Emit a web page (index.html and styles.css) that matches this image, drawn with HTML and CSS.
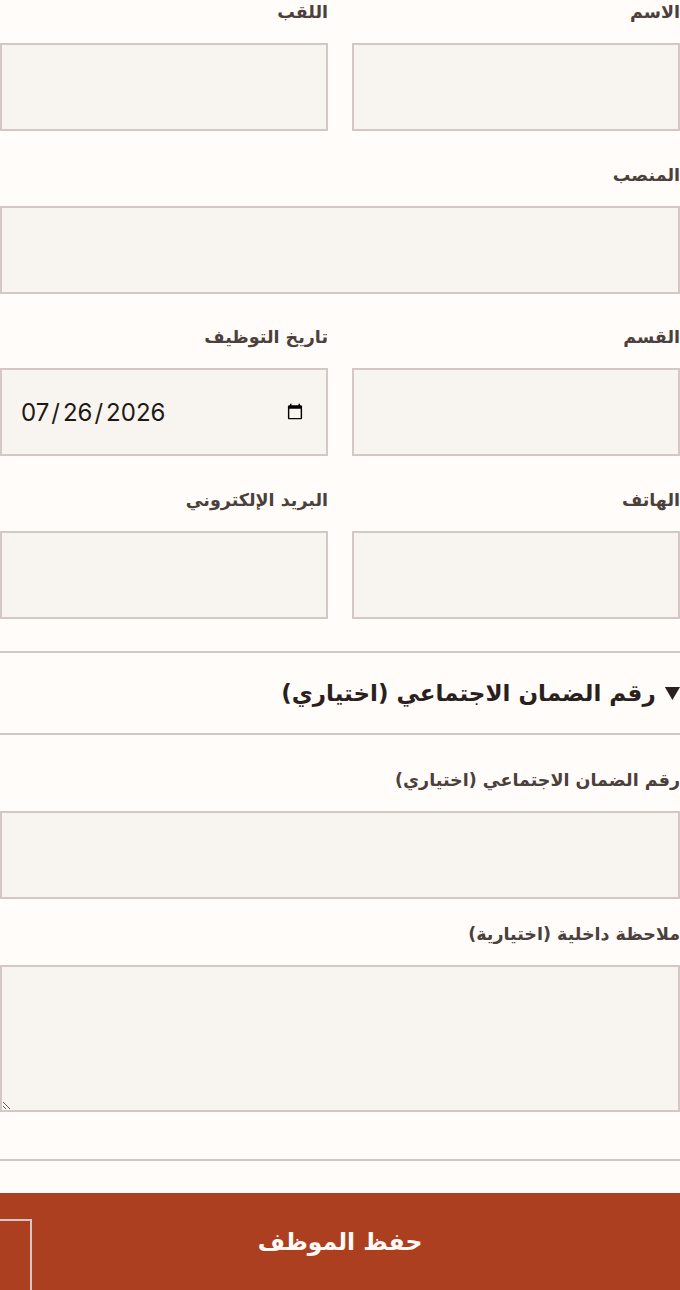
FILE: index.html
```html
<!DOCTYPE html>
<html lang="ar" dir="rtl">
<head>
<meta charset="utf-8">
<title>حفظ الموظف</title>
<link rel="stylesheet" href="styles.css">
</head>
<body>
<form class="form">
  <div class="grid">
    <div class="field">
      <label class="label" for="f-name">الاسم</label>
      <input class="input" id="f-name" type="text">
    </div>
    <div class="field">
      <label class="label" for="f-last">اللقب</label>
      <input class="input" id="f-last" type="text">
    </div>
    <div class="field span2">
      <label class="label" for="f-pos">المنصب</label>
      <input class="input" id="f-pos" type="text">
    </div>
    <div class="field">
      <label class="label" for="f-dept">القسم</label>
      <input class="input" id="f-dept" type="text">
    </div>
    <div class="field">
      <label class="label" for="f-date">تاريخ التوظيف</label>
      <input class="input date" id="f-date" type="date" value="2026-07-26" dir="ltr">
    </div>
    <div class="field">
      <label class="label" for="f-phone">الهاتف</label>
      <input class="input" id="f-phone" type="tel">
    </div>
    <div class="field">
      <label class="label" for="f-mail">البريد الإلكتروني</label>
      <input class="input" id="f-mail" type="email">
    </div>
  </div>

  <details class="details" open>
    <summary class="summary">رقم الضمان الاجتماعي (اختياري)</summary>
    <div class="field details-body">
      <label class="label" for="f-ssn">رقم الضمان الاجتماعي (اختياري)</label>
      <input class="input" id="f-ssn" type="text">
    </div>
  </details>

  <div class="field note">
    <label class="label" for="f-note">ملاحظة داخلية (اختيارية)</label>
    <textarea class="input textarea" id="f-note"></textarea>
  </div>

  <hr class="sep">

  <button class="submit" type="submit">حفظ الموظف<span class="ghost"></span></button>
</form>
</body>
</html>
```

FILE: styles.css
```css
* { box-sizing: border-box; }

html, body {
  margin: 0;
  padding: 0;
  background: #fffcfa;
}

body {
  font-family: "DejaVu Sans", "Noto Sans", sans-serif;
  color: #2b211e;
  overflow: hidden;
}

.form {
  width: 680px;
  display: flex;
  flex-direction: column;
}

.grid {
  display: grid;
  grid-template-columns: 1fr 1fr;
  column-gap: 24px;
  row-gap: 31.7px;
}

.span2 { grid-column: 1 / -1; }

.field {
  display: flex;
  flex-direction: column;
}

.label {
  display: block;
  font-size: 17.5px;
  font-weight: 700;
  line-height: 24px;
  color: #4b403c;
  margin-bottom: 19px;
}

.input {
  display: block;
  width: 100%;
  height: 88px;
  margin: 0;
  border: 2px solid #d3c8c3;
  border-radius: 0;
  background: #f8f5f0;
  font-family: Inter, "DejaVu Sans", sans-serif;
  font-size: 24px;
  color: #1f1815;
  padding: 0 18px;
  outline: none;
}

.date {
  text-align: left;
  padding: 0 20px 0 18px;
}

.date::-webkit-datetime-edit-text {
  padding: 0 2px 0 1px;
}

.date::-webkit-calendar-picker-indicator {
  width: 18px;
  height: 18px;
}

.details {
  margin-top: 32px;
  border-top: 2px solid #d3c8c3;
}

.summary {
  height: 82px;
  display: list-item;
  line-height: 80px;
  font-size: 23px;
  font-weight: 700;
  color: #2a201d;
  border-bottom: 2px solid #d3c8c3;
  cursor: pointer;
}

.details-body {
  margin-top: 33px;
}

.note {
  margin-top: 23px;
}

.textarea {
  height: 147px;
  resize: vertical;
  padding: 14px 18px;
}

.sep {
  margin: 47px 0 0;
  border: 0;
  border-top: 2px solid #d3c8c3;
  height: 0;
}

.submit {
  position: relative;
  margin-top: 32px;
  height: 97px;
  width: 100%;
  border: 0;
  background: #ab3f1f;
  color: #fffaf6;
  font-family: "DejaVu Sans", "Noto Sans", sans-serif;
  font-size: 23.5px;
  font-weight: 700;
  overflow: hidden;
}

.ghost {
  position: absolute;
  left: -20px;
  top: 26px;
  width: 52px;
  height: 100px;
  border: 2px solid #d3c8c3;
}
```
